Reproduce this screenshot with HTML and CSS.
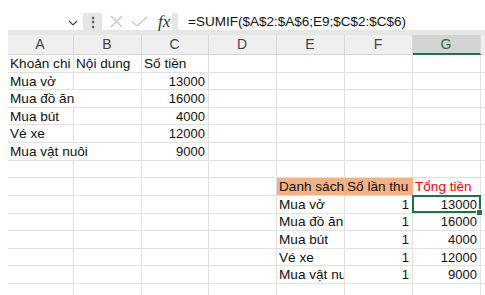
FILE: index.html
```html
<!DOCTYPE html>
<html lang="vi">
<head>
    <meta charset="UTF-8">
    <meta name="viewport" content="width=device-width, initial-scale=1.0">
    <title>SUMIF - Bảng tính</title>
    <link rel="stylesheet" href="styles.css">
</head>
<body>
    <!-- Formula bar -->
    <div class="toolbar">
        <div class="namebox">
            <span class="cell-ref">G9</span>
            <svg class="chevron" width="10" height="6" viewBox="0 0 10 6"><path d="M1 1 L5 5 L9 1" fill="none" stroke="#444" stroke-width="1.2"/></svg>
        </div>
        <div class="grip">&#8942;</div>
        <div class="formula-icons">
            <svg width="13" height="13" viewBox="0 0 13 13"><path d="M1 1 L12 12 M12 1 L1 12" stroke="#c6c6c6" stroke-width="1.3"/></svg>
            <svg width="17" height="11" viewBox="0 0 17 11"><path d="M1 5.5 L6 10 L16 1" fill="none" stroke="#c6c6c6" stroke-width="1.3"/></svg>
            <span class="fx">fx</span>
        </div>
        <div class="gap"></div>
        <div class="formula">=SUMIF($A$2:$A$6;E9;$C$2:$C$6)</div>
    </div>
    <div class="strip"></div>

    <!-- Sheet -->
    <div class="sheet">
        <div class="row head">
            <div class="stub"></div>
            <div class="c">A</div><div class="c">B</div><div class="c">C</div><div class="c">D</div>
            <div class="c">E</div><div class="c">F</div><div class="c active">G</div><div class="c"></div>
        </div>
        <div class="row">
            <div class="stub"></div>
            <div class="c">Khoản chi</div><div class="c">Nội dung</div><div class="c">Số tiền</div><div class="c"></div>
            <div class="c"></div><div class="c"></div><div class="c"></div><div class="c"></div>
        </div>
        <div class="row">
            <div class="stub"></div>
            <div class="c">Mua vở</div><div class="c"></div><div class="c num">13000</div><div class="c"></div>
            <div class="c"></div><div class="c"></div><div class="c"></div><div class="c"></div>
        </div>
        <div class="row">
            <div class="stub"></div>
            <div class="c span2">Mua đồ ăn</div><div class="c num">16000</div><div class="c"></div>
            <div class="c"></div><div class="c"></div><div class="c"></div><div class="c"></div>
        </div>
        <div class="row">
            <div class="stub"></div>
            <div class="c">Mua bút</div><div class="c"></div><div class="c num">4000</div><div class="c"></div>
            <div class="c"></div><div class="c"></div><div class="c"></div><div class="c"></div>
        </div>
        <div class="row">
            <div class="stub"></div>
            <div class="c">Vé xe</div><div class="c"></div><div class="c num">12000</div><div class="c"></div>
            <div class="c"></div><div class="c"></div><div class="c"></div><div class="c"></div>
        </div>
        <div class="row">
            <div class="stub"></div>
            <div class="c span2">Mua vật nuôi</div><div class="c num">9000</div><div class="c"></div>
            <div class="c"></div><div class="c"></div><div class="c"></div><div class="c"></div>
        </div>
        <div class="row">
            <div class="stub"></div>
            <div class="c"></div><div class="c"></div><div class="c"></div><div class="c"></div>
            <div class="c"></div><div class="c"></div><div class="c"></div><div class="c"></div>
        </div>
        <div class="row">
            <div class="stub"></div>
            <div class="c"></div><div class="c"></div><div class="c"></div><div class="c"></div>
            <div class="c orange">Danh sách</div><div class="c orange">Số lần thu</div><div class="c red">Tổng tiền</div><div class="c"></div>
        </div>
        <div class="row">
            <div class="stub"></div>
            <div class="c"></div><div class="c"></div><div class="c"></div><div class="c"></div>
            <div class="c">Mua vở</div><div class="c num">1</div><div class="c num selected">13000</div><div class="c"></div>
        </div>
        <div class="row">
            <div class="stub"></div>
            <div class="c"></div><div class="c"></div><div class="c"></div><div class="c"></div>
            <div class="c">Mua đồ ăn</div><div class="c num">1</div><div class="c num">16000</div><div class="c"></div>
        </div>
        <div class="row">
            <div class="stub"></div>
            <div class="c"></div><div class="c"></div><div class="c"></div><div class="c"></div>
            <div class="c">Mua bút</div><div class="c num">1</div><div class="c num">4000</div><div class="c"></div>
        </div>
        <div class="row">
            <div class="stub"></div>
            <div class="c"></div><div class="c"></div><div class="c"></div><div class="c"></div>
            <div class="c">Vé xe</div><div class="c num">1</div><div class="c num">12000</div><div class="c"></div>
        </div>
        <div class="row">
            <div class="stub"></div>
            <div class="c"></div><div class="c"></div><div class="c"></div><div class="c"></div>
            <div class="c">Mua vật nuôi</div><div class="c num">1</div><div class="c num">9000</div><div class="c"></div>
        </div>
        <div class="row">
            <div class="stub"></div>
            <div class="c"></div><div class="c"></div><div class="c"></div><div class="c"></div>
            <div class="c"></div><div class="c"></div><div class="c"></div><div class="c"></div>
        </div>
    </div>
</body>
</html>
```

FILE: styles.css
```css
body {
    margin: 0;
    padding: 0;
    font-family: "Liberation Sans", Arial, sans-serif;
    font-size: 13.6px;
    color: #111;
    background-color: #ffffff;
    width: 485px;
    height: 295px;
    overflow: hidden;
}

/* Formula bar */
.toolbar {
    display: flex;
    height: 30px;
    padding-top: 13px;
    box-sizing: border-box;
}
.namebox {
    width: 83px;
    display: flex;
    align-items: center;
    justify-content: space-between;
    padding-right: 5px;
    box-sizing: border-box;
    overflow: hidden;
}
.cell-ref {
    margin-left: -18px;
    color: #333;
}
.chevron {
    margin-top: 3px;
}
.grip {
    width: 19px;
    background-color: #e6e6e6;
    color: #555;
    font-size: 14px;
    font-weight: bold;
    display: flex;
    align-items: center;
    justify-content: center;
}
.formula-icons {
    width: 70px;
    display: flex;
    align-items: center;
    gap: 8px;
    padding-left: 8px;
    box-sizing: border-box;
}
.fx {
    font-family: "Liberation Serif", "Times New Roman", serif;
    font-style: italic;
    font-size: 17px;
    color: #333;
    margin-left: 2px;
}
.gap {
    width: 6px;
    background-color: #e6e6e6;
}
.formula {
    flex: 1;
    padding-left: 10px;
    display: flex;
    align-items: center;
    font-size: 13.5px;
    color: #111;
    white-space: nowrap;
}
.strip {
    height: 5px;
    margin-left: 8px;
    background-color: #e6e6e6;
}

/* Sheet grid */
.row {
    display: grid;
    grid-template-columns: 8px 66px 68px 67px 68px 68px 68px 68px 1fr;
    height: 17.6px;
}
.stub {
    background-color: #ffffff;
}
.c {
    border-right: 1px solid #e1e1e1;
    border-bottom: 1px solid #e1e1e1;
    box-sizing: border-box;
    padding: 0 3px 0 2px;
    line-height: 17px;
    white-space: nowrap;
    overflow: hidden;
}
.span2 {
    grid-column: span 2;
}
.num {
    text-align: right;
    font-size: 13px;
}
.head {
    height: 20px;
}
.head .c {
    background-color: #efefef;
    border-right: 1px solid #d8d8d8;
    border-bottom: 1px solid #d4d4d4;
    text-align: center;
    color: #444;
    font-size: 14px;
    line-height: 19px;
}
.head .c.active {
    background-color: #d3d3d3;
    border-bottom: 2px solid #217346;
    color: #217346;
}
.orange {
    background-color: #f4b183;
    border-right-color: #f4b183;
    padding-left: 2px;
    padding-right: 0;
}
.red {
    color: #ff0000;
}
.selected {
    position: relative;
    overflow: visible;
}
.selected::before {
    content: "";
    position: absolute;
    top: -1px;
    left: -1px;
    right: -1px;
    bottom: 0;
    border: 2px solid #217346;
}
.selected::after {
    content: "";
    position: absolute;
    right: -3px;
    bottom: -3px;
    width: 5px;
    height: 5px;
    background-color: #217346;
    border: 1px solid #ffffff;
}
```
